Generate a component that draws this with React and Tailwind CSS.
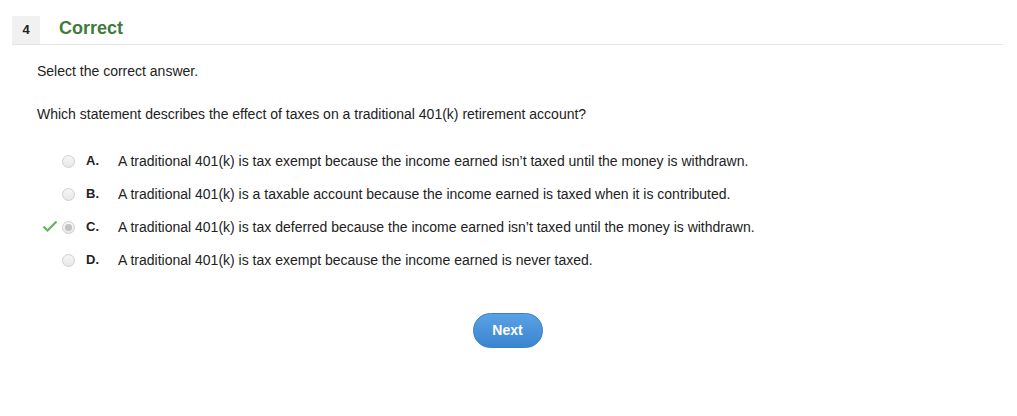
import React from 'react';

const options = [
  { letter: 'A.', text: 'A traditional 401(k) is tax exempt because the income earned isn\u2019t taxed until the money is withdrawn.' },
  { letter: 'B.', text: 'A traditional 401(k) is a taxable account because the income earned is taxed when it is contributed.' },
  { letter: 'C.', text: 'A traditional 401(k) is tax deferred because the income earned isn\u2019t taxed until the money is withdrawn.', selected: true },
  { letter: 'D.', text: 'A traditional 401(k) is tax exempt because the income earned is never taxed.' },
];

const Radio = ({ selected }) => (
  <span className="w-[13px] h-[13px] rounded-full border border-[#cfcfcf] bg-gradient-to-b from-[#f6f6f6] to-[#e8e8e8] flex items-center justify-center">
    {selected && <span className="w-[7px] h-[7px] rounded-full bg-[#c2c2c2]" />}
  </span>
);

const App = () => {
  return (
    <div className="w-[1017px] h-[416px] bg-white text-[14px] text-[#222] pt-[16px]" style={{ fontFamily: '"Liberation Sans", Arial, sans-serif' }}>
      <div className="mx-[12px] w-[991px] flex items-center border-b border-[#e3e3e3]">
        <div className="w-[28px] h-[28px] bg-[#f1f1f1] flex items-center justify-center font-bold text-[13px] text-[#222]">4</div>
        <div className="ml-[19px] mt-[-3px] text-[18px] font-bold text-[#3f7a3f]">Correct</div>
      </div>

      <div className="pl-[37px] pt-[18px]">
        <p className="leading-[16px]">Select the correct answer.</p>
        <p className="mt-[27px] leading-[16px]">Which statement describes the effect of taxes on a traditional 401(k) retirement account?</p>
      </div>

      <div className="mt-[31px] flex flex-col gap-[17px]">
        {options.map((o) => (
          <div key={o.letter} className="flex items-center h-[16px]">
            <div className="w-[62px] flex justify-end pr-[4px]">
              {o.selected && (
                <svg width="16" height="12" viewBox="0 0 16 12" className="mt-[-2px]">
                  <path d="M1.5 6.5 L5.5 10.5 L14.5 1.5" fill="none" stroke="#5cb85c" strokeWidth="2.2" />
                </svg>
              )}
            </div>
            <Radio selected={o.selected} />
            <span className="ml-[11px] w-[32px] font-bold text-[13px]">{o.letter}</span>
            <span>{o.text}</span>
          </div>
        ))}
      </div>

      <div className="flex justify-center mt-[45px] pr-[2px]">
        <button className="w-[70px] h-[35px] rounded-full bg-gradient-to-b from-[#5aa2e6] to-[#3a84d0] border border-[#3a7fc6] text-white font-bold text-[14px]">
          Next
        </button>
      </div>
    </div>
  );
};

export default App;
